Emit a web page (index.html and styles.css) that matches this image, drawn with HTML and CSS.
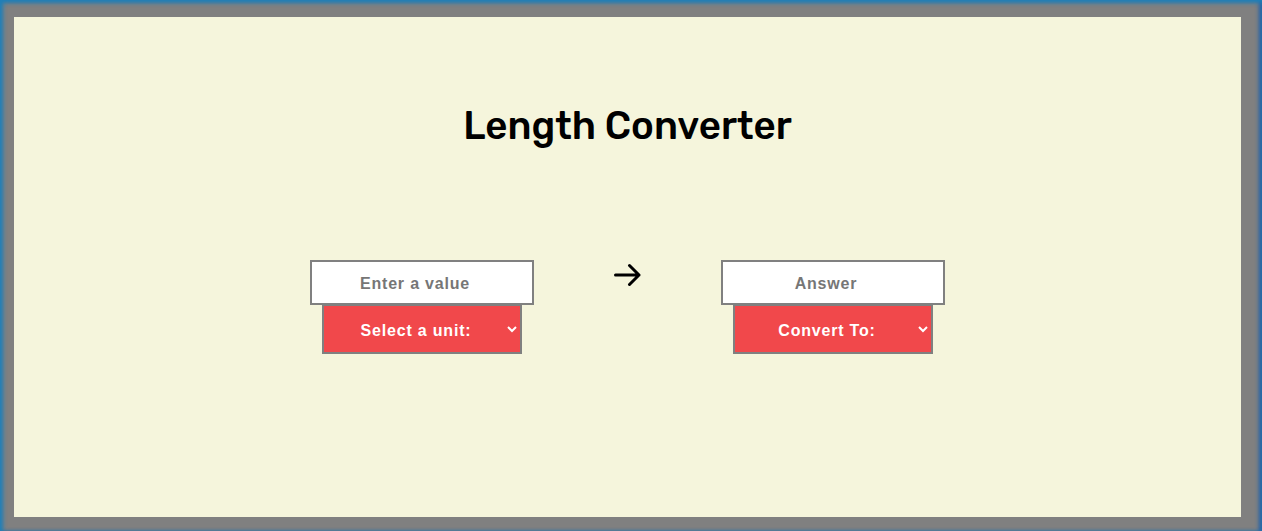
FILE: index.html
```html
<!DOCTYPE html>
<html>
<head>
<meta charset="utf-8">
<link rel="stylesheet" href="styles.css">
</head>
<body>
<div class="frame">
  <main class="panel">
    <h1 class="title">Length Converter</h1>
    <div class="converter">
      <div class="group">
        <input class="field" type="text" placeholder="Enter a value">
        <select class="unit">
          <option>Select a unit:</option>
        </select>
      </div>
      <div class="arrow">
        <svg width="27" height="24" viewBox="0 0 27 24"><path d="M1.5 12H25M15.5 2.5L25 12L15.5 21.5" fill="none" stroke="#000" stroke-width="3" stroke-linecap="round" stroke-linejoin="round"/></svg>
      </div>
      <div class="group">
        <input class="field" type="text" placeholder="Answer">
        <select class="unit">
          <option>Convert To:</option>
        </select>
      </div>
    </div>
  </main>
</div>
</body>
</html>
```

FILE: styles.css
```css
html, body {
  margin: 0;
  padding: 0;
}
.frame {
  width: 1262px;
  height: 531px;
  box-sizing: border-box;
  background: #808080;
  padding: 17px 21px 14px 14px;
  box-shadow: inset 4px 0 4px -1px #1f7fb8, inset 0 4px 4px -1px #1f7fb8, inset -4px 0 4px -1px #1f5fa8;
}
.panel {
  background: #f5f5dc;
  height: 100%;
  box-sizing: border-box;
  display: flex;
  flex-direction: column;
  align-items: center;
  padding-top: 84px;
}
.title {
  margin: 0;
  font-family: Rubik, Inter, "Noto Sans", sans-serif;
  font-weight: 500;
  font-size: 38.5px;
  line-height: 50px;
  color: #000;
}
.converter {
  margin-top: 109px;
  display: flex;
  align-items: flex-start;
  gap: 80px;
}
.group {
  display: flex;
  flex-direction: column;
  align-items: center;
}
.field {
  width: 224px;
  height: 45px;
  box-sizing: border-box;
  border: 2px solid #808080;
  background: #fff;
  font-family: "Liberation Sans", Arial, sans-serif;
  font-weight: bold;
  font-size: 16px;
  letter-spacing: 0.8px;
  text-align: center;
  padding: 2px 14px 0 0;
  outline: none;
  margin: 0;
}
.field::placeholder {
  color: #767676;
}
.unit {
  width: 200px;
  height: 49px;
  box-sizing: border-box;
  border: 2px solid #808080;
  border-top: 1px solid #808080;
  background: #f1484b;
  color: #fff;
  font-family: "Liberation Sans", Arial, sans-serif;
  font-weight: bold;
  font-size: 16px;
  letter-spacing: 0.8px;
  text-align: center;
  text-align-last: center;
  padding-top: 2px;
  margin: 0;
  border-radius: 0;
  outline: none;
}
.arrow {
  width: 27px;
  height: 24px;
  margin-top: 3px;
  display: flex;
}
```
